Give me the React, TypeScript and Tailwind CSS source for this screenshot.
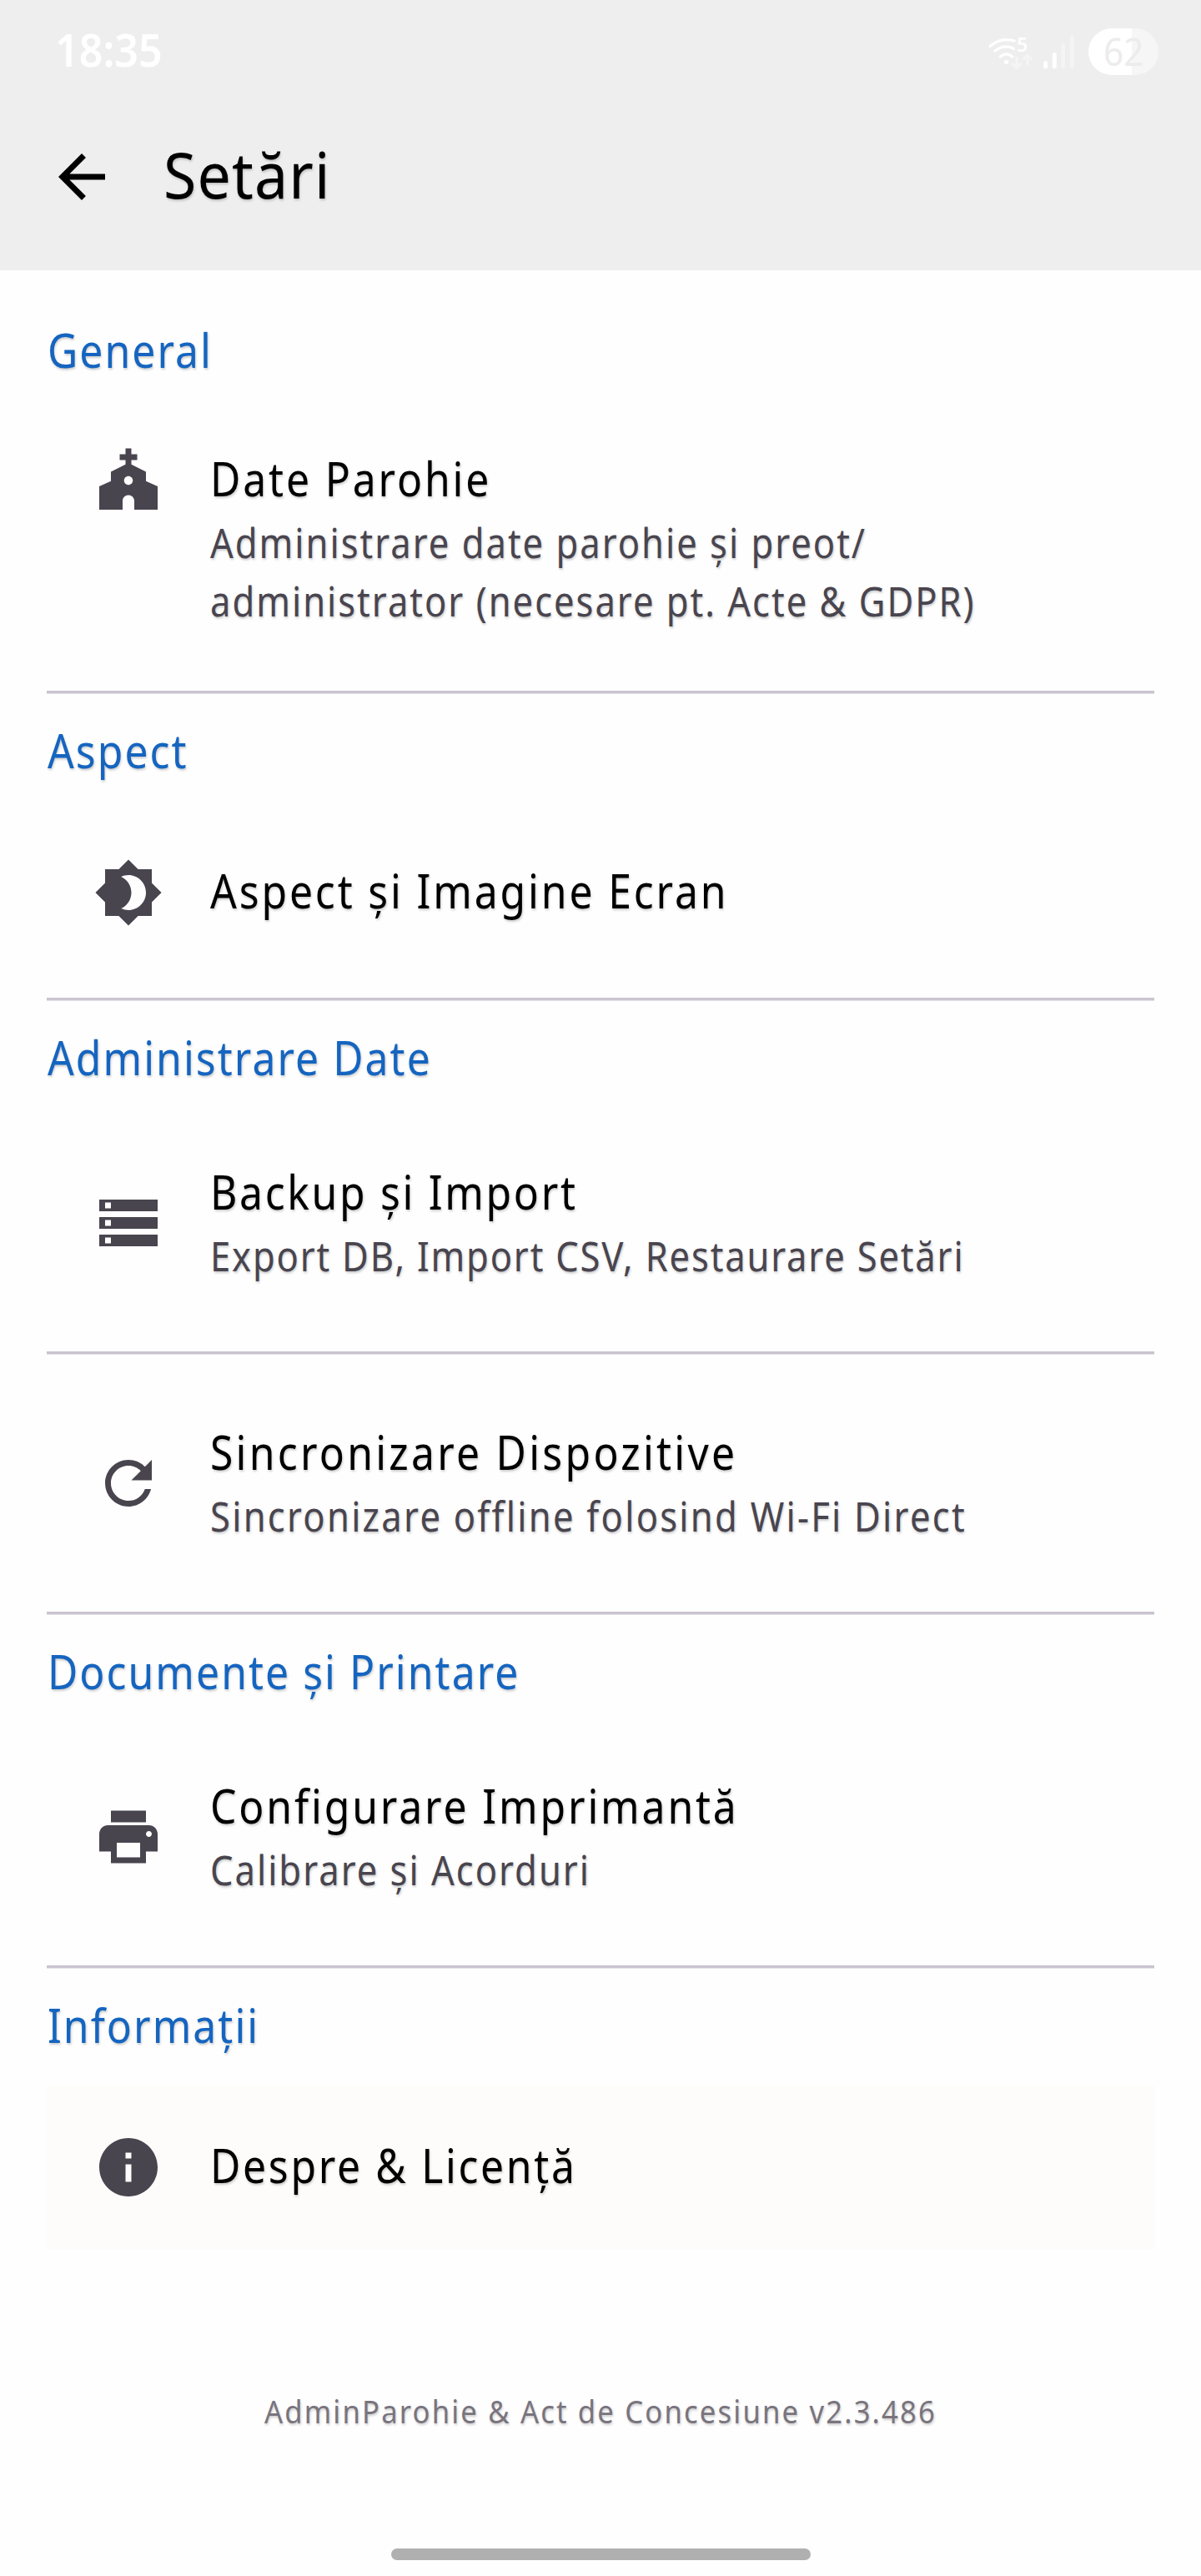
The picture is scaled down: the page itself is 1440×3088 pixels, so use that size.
import { clsx } from "clsx";
import type { IconType } from "react-icons";
import {
  MdArrowBack,
  MdBrightness4,
  MdChurch,
  MdInfo,
  MdPrint,
  MdRefresh,
  MdStorage,
} from "react-icons/md";

interface SettingItem {
  icon: IconType;
  title: string;
  lines?: string[];
  highlighted?: boolean;
  titleTracking?: string;
  lineTracking?: string;
}

interface SettingSection {
  label: string;
  items: SettingItem[];
}

const sections: SettingSection[] = [
  {
    label: "General",
    items: [
      {
        icon: MdChurch,
        title: "Date Parohie",
        lines: ["Administrare date parohie și preot/", "administrator (necesare pt. Acte & GDPR)"],
      },
    ],
  },
  {
    label: "Aspect",
    items: [{ icon: MdBrightness4, title: "Aspect și Imagine Ecran" }],
  },
  {
    label: "Administrare Date",
    items: [
      {
        icon: MdStorage,
        title: "Backup și Import",
        lines: ["Export DB, Import CSV, Restaurare Setări"],
        titleTracking: "tracking-[3px]",
        lineTracking: "tracking-[2px]",
      },
      {
        icon: MdRefresh,
        title: "Sincronizare Dispozitive",
        lines: ["Sincronizare offline folosind Wi-Fi Direct"],
        titleTracking: "tracking-[3.65px]",
        lineTracking: "tracking-[2.5px]",
      },
    ],
  },
  {
    label: "Documente și Printare",
    items: [
      {
        icon: MdPrint,
        title: "Configurare Imprimantă",
        lines: ["Calibrare și Acorduri"],
      },
    ],
  },
  {
    label: "Informații",
    items: [
      {
        icon: MdInfo,
        title: "Despre & Licență",
        highlighted: true,
        titleTracking: "tracking-[3px]",
      },
    ],
  },
];

function SignalIcons() {
  return (
    <svg viewBox="0 0 318 126" className="h-[42px] w-[106px]" fill="none" strokeLinecap="round">
      {/* wifi */}
      <g stroke="#ffffff" strokeWidth="10">
        <path d="M7 43 Q45 10 93 24" />
        <path d="M24 60 Q58 34 91 52" />
        <path d="M43 81 Q65 62 87 81" />
      </g>
      <circle cx="65" cy="100" r="8" fill="#ffffff" />
      <text x="102" y="63" fontSize="69" fontWeight="600" fill="#ffffff">
        5
      </text>
      {/* traffic arrows */}
      <g stroke="#f5f5f5" strokeWidth="9" strokeLinejoin="round">
        <path d="M102 85 V120 M88 107 L102 121 L116 107" />
        <path d="M141 110 V76 M127 89 L141 75 L155 89" />
      </g>
      {/* mobile signal */}
      <g strokeWidth="15">
        <path d="M206 104 V116" stroke="#ffffff" />
        <path d="M238 73 V116" stroke="#ffffff" />
        <path d="M269 40 V116" stroke="#f4f4f4" />
        <path d="M301 13 V116" stroke="#f4f4f4" />
      </g>
    </svg>
  );
}

function StatusBar() {
  return (
    <div className="flex h-[100px] items-center justify-between pt-6 pr-[51px] pl-[66px]">
      <span className="mb-1.5 origin-left scale-x-93 text-[54px] leading-none font-semibold text-white">
        18:35
      </span>
      <div className="flex items-center gap-[14px]">
        <SignalIcons />
        <div className="flex h-14 w-[84px] items-center justify-center rounded-full bg-[linear-gradient(90deg,#ffffff_52px,#f6f6f6_52px)] pb-[3px] text-[46px] leading-none text-[#ececec]">
          <span className="scale-x-92">62</span>
        </div>
      </div>
    </div>
  );
}

function TopBar() {
  return (
    <header className="h-[324px] bg-[#eeeeee]">
      <StatusBar />
      <div className="flex h-56 items-center gap-14 px-14">
        <MdArrowBack className="size-[84px]" />
        <h1 className="mb-1.5 origin-left scale-x-93 text-[77px] leading-[98px] tracking-[1.2px] [text-shadow:1px_2px_3px_rgba(0,0,0,0.2)]">
          Setări
        </h1>
      </div>
    </header>
  );
}

function SettingRow({ item }: { item: SettingItem }) {
  const { icon: Icon, title, lines = [], highlighted, titleTracking, lineTracking } = item;
  const tall = lines.length > 1;

  return (
    <div
      className={clsx(
        "flex gap-14 px-14",
        tall && "h-[308px] items-start pt-[42px]",
        lines.length === 1 && "h-[252px] items-center",
        lines.length === 0 && "h-[196px] items-center",
        highlighted && "bg-[#fdfcfa]"
      )}
    >
      <Icon className="size-[84px] shrink-0 text-[#49454f]" />
      <div className={clsx("origin-left scale-x-89 whitespace-nowrap", tall ? "-mt-[3px]" : "mb-1.5")}>
        <p className={clsx("text-[56px] leading-[84px] text-black", titleTracking ?? "tracking-[3.2px]")}>
          {title}
        </p>
        {lines.map((line) => (
          <p
            key={line}
            className={clsx("text-[49px] leading-[70px] text-[#49454f]", lineTracking ?? "tracking-[2.2px]")}
          >
            {line}
          </p>
        ))}
      </div>
    </div>
  );
}

function Divider() {
  return <div className="my-7 h-1 border-b border-[#e4e1e7] bg-[#cac4d0] bg-clip-padding" />;
}

export default function App() {
  return (
    <div className="flex h-[3088px] w-[1440px] flex-col overflow-hidden bg-[#fefefe] font-['Noto_Sans','Open_Sans',sans-serif] text-black">
      <TopBar />
      <main className="flex flex-1 flex-col px-14 pt-14 [text-shadow:1px_2px_3px_rgba(0,0,0,0.2)]">
        {sections.map((section, i) => (
          <section key={section.label}>
            {i > 0 && <Divider />}
            <h2 className="h-28 origin-left scale-x-89 pl-px text-[56px] leading-[78px] tracking-[2.3px] text-[#1565c0]">
              {section.label}
            </h2>
            {section.items.map((item, j) => (
              <div key={item.title}>
                {j > 0 && <Divider />}
                <SettingRow item={item} />
              </div>
            ))}
          </section>
        ))}
        <p className="mt-[166px] scale-x-89 text-center text-[39px] leading-14 tracking-[2.4px] text-[#79747e]">
          AdminParohie & Act de Concesiune v2.3.486
        </p>
      </main>
      {/* gesture handle */}
      <div className="mb-[19px] h-[14px] w-[503px] self-center rounded-full bg-[#b0b0b0]" />
    </div>
  );
}
